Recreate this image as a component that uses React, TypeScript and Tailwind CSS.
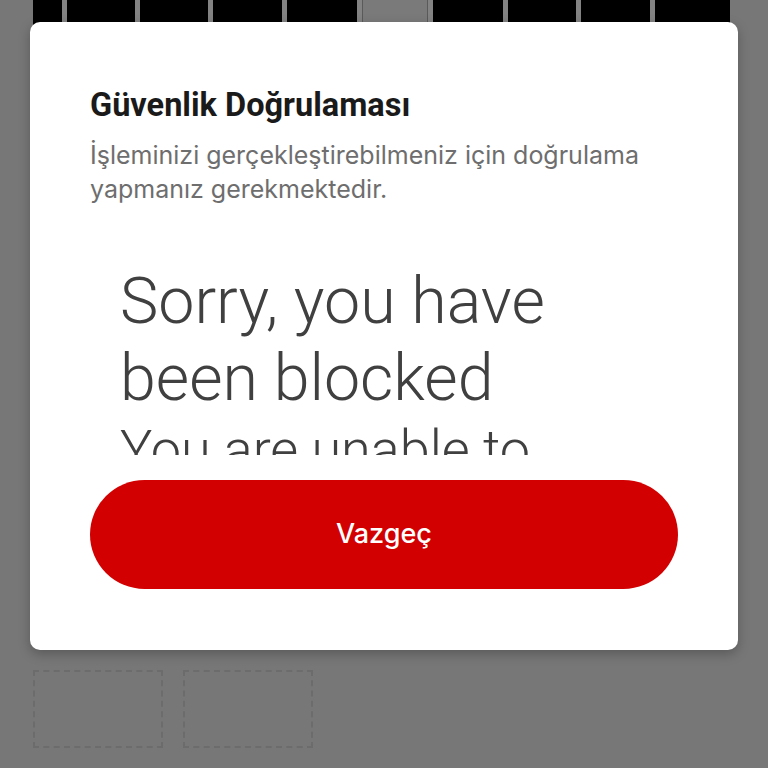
import React from "react";

const cells: { w: number; gray?: boolean }[] = [
  { w: 29 },
  { w: 68 },
  { w: 69 },
  { w: 69 },
  { w: 70 },
  { w: 66, gray: true },
  { w: 70 },
  { w: 69 },
  { w: 69 },
  { w: 75 },
];

export default function App() {
  return (
    <div className="relative w-[768px] h-[768px] overflow-hidden bg-[#777777]">
      {/* background page under overlay */}
      <div className="flex flex-col">
        <div className="ml-[33px] flex h-[40px] w-[697px] gap-[5px] bg-[#838383]">
          {cells.map((c, i) => (
            <div
              key={i}
              style={{ width: c.w }}
              className={
                c.gray
                  ? "h-full bg-[#7a7a7a] border-x border-[#5a5a5a]"
                  : "h-full bg-black"
              }
            />
          ))}
        </div>
        <div className="ml-[33px] mt-[630px] flex gap-[20px]">
          <div className="h-[78px] w-[130px] border-2 border-dashed border-[#6c6c6c]" />
          <div className="h-[78px] w-[130px] border-2 border-dashed border-[#6c6c6c]" />
        </div>
      </div>

      {/* modal */}
      <div className="absolute left-[30px] top-[22px] flex h-[628px] w-[708px] flex-col rounded-[10px] bg-white px-[60px] pb-[61px] pt-[64px] shadow-[0_4px_12px_rgba(0,0,0,0.25)]">
        <h1
          className="text-[32.5px] font-bold leading-[38px] text-[#1a1a1a]"
          style={{ fontFamily: "Roboto, 'Liberation Sans', sans-serif" }}
        >
          Güvenlik Doğrulaması
        </h1>
        <p
          className="mt-[14px] text-[25px] leading-[34px] text-[#6e6e6e]"
          style={{ fontFamily: "Inter, 'Noto Sans', sans-serif" }}
        >
          İşleminizi gerçekleştirebilmeniz için doğrulama yapmanız gerekmektedir.
        </p>
        <div className="mt-[20px] h-[229px] shrink-0 overflow-hidden">
          <div
            className="pl-[30px] pt-[37px] text-[#404040]"
            style={{ fontFamily: "Roboto, 'Liberation Sans', sans-serif" }}
          >
            <div className="text-[64.5px] font-light leading-[77px]">
              Sorry, you have
              <br />
              been blocked
            </div>
            <div className="text-[54px] font-light leading-[65px]">
              You are unable to
            </div>
          </div>
        </div>
        <button
          className="mt-auto flex h-[109px] w-full shrink-0 items-center justify-center rounded-full bg-[#d20000] text-[27px] font-medium text-white"
          style={{ fontFamily: "Inter, 'Noto Sans', sans-serif" }}
        >
          Vazgeç
        </button>
      </div>
    </div>
  );
}
